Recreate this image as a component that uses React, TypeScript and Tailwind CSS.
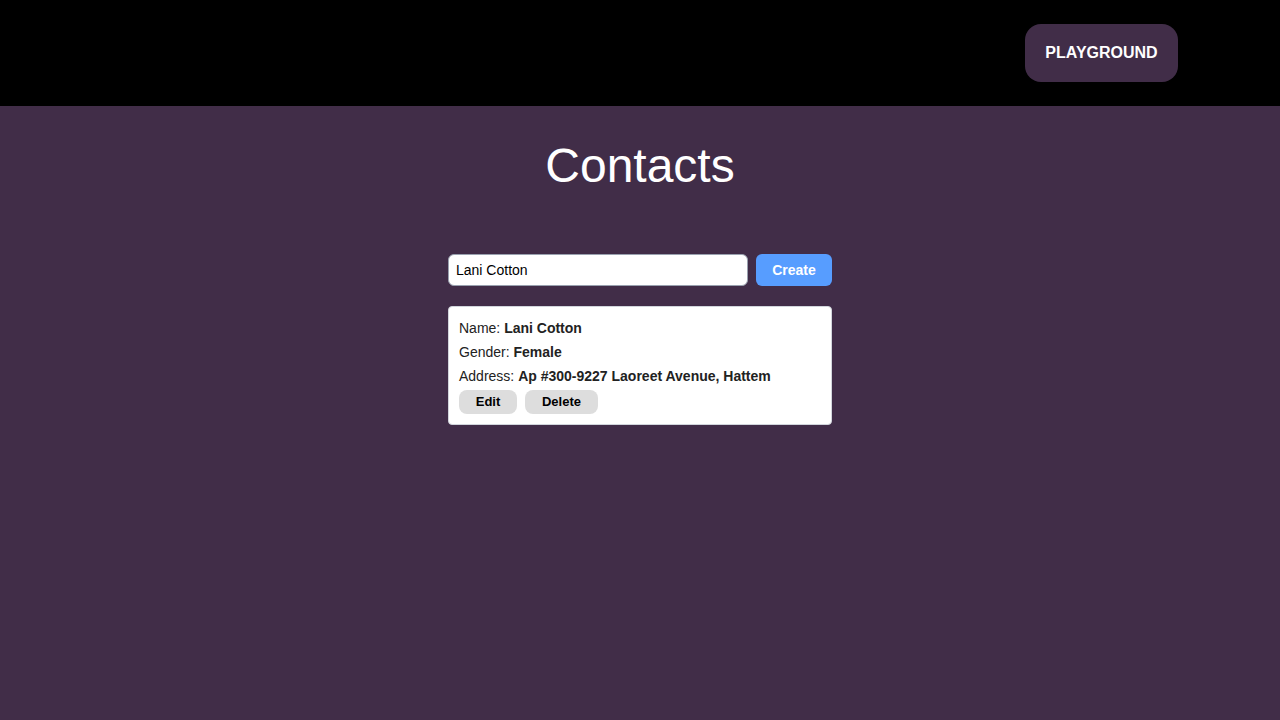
import { useState } from 'react';

export default function App() {
  const [name, setName] = useState('Lani Cotton');

  return (
    <div className="min-h-screen bg-[#412d48] font-['Liberation_Sans',Arial,sans-serif]">
      {/* Top bar */}
      <header className="h-[106px] bg-black flex items-center justify-end pr-[102px]">
        <button className="h-[58px] w-[153px] rounded-2xl bg-[#412d48] text-white font-bold text-[16px]">
          PLAYGROUND
        </button>
      </header>

      <main className="flex flex-col items-center">
        <h1 className="mt-[30px] text-white text-[48px] font-light leading-[60px]">Contacts</h1>

        <div className="mt-[58px] w-[384px] flex flex-col">
          <div className="flex gap-2">
            <input
              value={name}
              onChange={(e) => setName(e.target.value)}
              className="h-8 w-[300px] rounded-md border border-gray-400 bg-white px-[7px] text-[14px] text-black outline-none"
            />
            <button className="h-8 w-[76px] rounded-md bg-[#579dff] text-white font-bold text-[14px]">
              Create
            </button>
          </div>

          <div className="mt-5 rounded bg-white border border-gray-300 px-[10px] pt-[9px] pb-[10px] text-[14px] text-[#222]">
            <div className="leading-6">
              Name: <b>Lani Cotton</b>
            </div>
            <div className="leading-6">
              Gender: <b>Female</b>
            </div>
            <div className="leading-6">
              Address: <b>Ap #300-9227 Laoreet Avenue, Hattem</b>
            </div>
            <div className="flex gap-2 mt-[2px]">
              <button className="h-6 w-[58px] rounded-lg bg-[#dddddd] text-black font-bold text-[13px]">Edit</button>
              <button className="h-6 w-[73px] rounded-lg bg-[#dddddd] text-black font-bold text-[13px]">Delete</button>
            </div>
          </div>
        </div>
      </main>
    </div>
  );
}
